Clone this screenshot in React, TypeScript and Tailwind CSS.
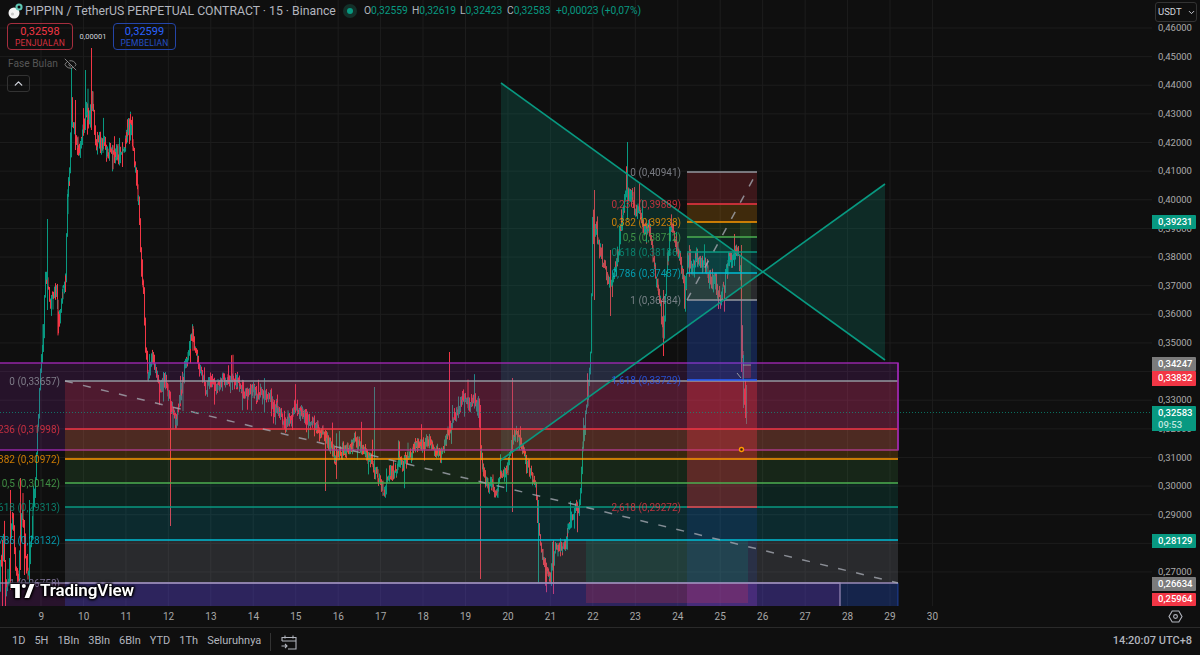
import React, { useMemo } from 'react';
import { ChevronDown, ChevronUp, EyeOff } from 'lucide-react';

const UP = '#089981';
const DOWN = '#f23645';

// price -> pixel on the plot
const py = (p: number) => 28 + (0.46 - p) * 2863;

const DAYS = [9, 10, 11, 12, 13, 14, 15, 16, 17, 18, 19, 20, 21, 22, 23, 24, 25, 26, 27, 28, 29, 30];
const TICKS = [46, 45, 44, 43, 42, 41, 40, 39, 38, 37, 36, 35, 34, 33, 32, 31, 30, 29, 28, 27];
const HIDDEN_TICKS = [34, 28];
const RANGES = ['1D', '5H', '1Bln', '3Bln', '6Bln', 'YTD', '1Th', 'Seluruhnya'];

// rough price path, read off the chart by hand: [x, y]
const PATH: [number, number][] = [
  [0, 570], [3, 540], [6, 590], [9, 560], [12, 520], [15, 555], [18, 575], [20, 520], [22, 500], [25, 540], [28, 570],
  [31, 520], [34, 480], [36, 440], [38, 410], [40, 360], [42, 340], [45, 275], [47, 270], [50, 300], [53, 290], [56, 290],
  [59, 320], [62, 290], [65, 280], [67, 200], [69, 170], [71, 130], [75, 140], [80, 150], [85, 115], [88, 120], [92, 100],
  [95, 135], [100, 145], [105, 150], [110, 150], [115, 155], [120, 150], [125, 140], [128, 120], [131, 125], [134, 165],
  [136, 175], [138, 200], [140, 240], [143, 300], [145, 350], [148, 380], [152, 365], [155, 375], [160, 390], [165, 375],
  [169, 400], [175, 420], [180, 400], [185, 370], [192, 335], [197, 360], [205, 390], [212, 380], [216, 385], [225, 385],
  [235, 380], [245, 395], [255, 395], [265, 395], [275, 405], [285, 420], [295, 405], [305, 420], [315, 425], [325, 445],
  [335, 450], [345, 455], [355, 440], [365, 450], [375, 465], [383, 485], [390, 465], [400, 460], [410, 450], [418, 445],
  [430, 445], [440, 450], [450, 420], [458, 405], [463, 395], [470, 405], [478, 408], [480, 450], [485, 480], [490, 485],
  [495, 490], [500, 470], [506, 465], [510, 440], [515, 430], [520, 445], [525, 465], [530, 475], [535, 490], [537, 520],
  [540, 550], [545, 570], [550, 580], [555, 545], [560, 548], [565, 545], [570, 520], [573, 510], [578, 510], [580, 490],
  [582, 450], [585, 420], [587, 400], [590, 360], [591, 300], [592, 240], [595, 240], [600, 255], [605, 265], [610, 290],
  [613, 280], [618, 250], [622, 220], [626, 190], [630, 200], [635, 210], [640, 215], [645, 225], [650, 230], [655, 270],
  [660, 310], [663, 345], [667, 260], [670, 230], [675, 245], [680, 265], [685, 285], [688, 265], [695, 262], [705, 270],
  [715, 285], [720, 295], [725, 275], [732, 265], [737, 252], [740, 280], [741, 330], [743, 385], [745, 405], [746, 412],
];

// long single wicks: [x, top, bottom, colour]
const SPIKES: [number, number, number, string][] = [
  [2, 540, 606, DOWN], [5, 560, 606, DOWN], [10, 490, 590, DOWN], [20, 478, 570, DOWN], [24, 520, 575, DOWN], [29, 500, 590, UP],
  [47, 219, 310, UP], [71, 68, 140, UP], [75, 100, 150, DOWN], [85, 70, 130, UP], [91, 48, 130, DOWN], [170, 400, 526, DOWN],
  [325, 430, 491, DOWN], [374, 387, 470, UP], [449, 352, 440, DOWN], [480, 405, 579, DOWN],
  [512, 378, 512, DOWN], [538, 500, 583, UP], [553, 540, 594, DOWN], [594, 190, 300, DOWN], [627, 142, 220, UP], [610, 250, 316, DOWN],
  [663, 290, 356, DOWN], [741, 245, 372, DOWN], [743, 355, 408, UP], [746, 385, 424, UP], [745, 380, 418, DOWN],
];

const FIB_BIG = [
  { y: 381, label: '0 (0,33657)', line: '#9598a1', fill: 'rgba(242,54,69,0.2)' },
  { y: 429, label: '0,236 (0,31998)', line: '#f23645', fill: 'rgba(255,152,0,0.18)' },
  { y: 459, label: '0,382 (0,30972)', line: '#ff9800', fill: 'rgba(76,175,80,0.15)' },
  { y: 483, label: '0,5 (0,30142)', line: '#4caf50', fill: 'rgba(8,153,129,0.15)' },
  { y: 507, label: '0,618 (0,29313)', line: '#089981', fill: 'rgba(0,188,212,0.16)' },
  { y: 540, label: '0,786 (0,28132)', line: '#00bcd4', fill: 'rgba(120,123,134,0.25)' },
  { y: 583, label: '1 (0,26758)', line: '#9a8bb8', fill: 'rgba(41,98,255,0.25)' },
];

const FIB_SMALL = [
  { y: 172, label: '0 (0,40941)', line: '#9598a1', fill: 'rgba(242,54,69,0.2)' },
  { y: 204, label: '0,236 (0,39889)', line: '#f23645', fill: 'rgba(255,152,0,0.2)' },
  { y: 222, label: '0,382 (0,39238)', line: '#ff9800', fill: 'rgba(76,175,80,0.15)' },
  { y: 237, label: '0,5 (0,38712)', line: '#4caf50', fill: 'rgba(8,153,129,0.15)' },
  { y: 252, label: '0,618 (0,38186)', line: '#089981', fill: 'rgba(0,188,212,0.15)' },
  { y: 273, label: '0,786 (0,37437)', line: '#00bcd4', fill: 'rgba(120,123,134,0.25)' },
  { y: 300, label: '1 (0,36484)', line: '#9598a1', fill: 'rgba(41,98,255,0.25)' },
  { y: 380, label: '1,618 (0,33729)', line: '#2962ff', fill: 'rgba(242,54,69,0.32)' },
  { y: 507, label: '2,618 (0,29272)', line: '#f23645', fill: 'rgba(41,98,255,0.12)' },
];

const LEFT_TAGS = [
  { text: '0,34247', cls: 'top-[357px] h-[14px] bg-[#7b7b7b]' },
  { text: '0,33832', cls: 'top-[371px] h-[15px] bg-[#f23645]' },
  { text: '0,28129', cls: 'top-[534px] h-[14px] bg-[#089981]' },
  { text: '0,26634', cls: 'top-[577px] h-[14px] bg-[#7b7b7b]' },
  { text: '0,25964', cls: 'top-[593px] h-[13px] bg-[#f23645]' },
  { text: '0,39231', cls: 'top-[215px] h-[14px] bg-[#089981]' },
];

const centerAt = (x: number) => {
  for (let i = 1; i < PATH.length; i++) {
    if (x <= PATH[i][0]) {
      const [x0, y0] = PATH[i - 1];
      const [x1, y1] = PATH[i];
      return y0 + ((x - x0) / (x1 - x0)) * (y1 - y0);
    }
  }
  return PATH[PATH.length - 1][1];
};

const buildCandles = () => {
  let seed = 77;
  const rnd = () => {
    seed = (seed * 16807) % 2147483647;
    return seed / 2147483647;
  };
  const out: { x: number; top: number; bottom: number; color: string }[] = [];
  let drift = 0;
  let prev = PATH[0][1];
  for (let i = 0; i <= 1492; i++) {
    const x = i * 0.5;
    const vol = x < 145 || x > 585 ? 1.35 : 1;
    drift = drift * 0.9 + (rnd() - 0.5) * 6 * vol;
    const close = centerAt(x) + drift + (rnd() - 0.5) * 9 * vol;
    // the odd long wick
    const wickUp = rnd() < 0.05 ? 8 + rnd() * 16 : rnd() * 5;
    const wickDown = rnd() < 0.05 ? 8 + rnd() * 16 : rnd() * 5;
    out.push({
      // mostly snapped to whole pixels, so reds and teals stay clean
      x: i % 5 === 0 ? x : Math.round(x),
      top: Math.min(prev, close) - wickUp,
      bottom: Math.max(prev, close) + wickDown,
      color: close < prev ? UP : DOWN,
    });
    prev = close;
  }
  return out;
};

const FibBands = ({ x0, x1, levels, endY }: { x0: number; x1: number; levels: typeof FIB_BIG; endY: number }) => (
  <>
    {levels.map((l, i) => {
      const next = i < levels.length - 1 ? levels[i + 1].y : endY;
      return <rect key={l.y} x={x0} y={l.y} width={x1 - x0} height={next - l.y} fill={l.fill} />;
    })}
  </>
);

const FibLines = ({ x0, x1, levels }: { x0: number; x1: number; levels: typeof FIB_BIG }) => (
  <>
    {levels.map((l) => (
      <line key={l.y} x1={x0} x2={x1} y1={l.y} y2={l.y} stroke={l.line} strokeWidth={1.6} />
    ))}
  </>
);

const FibLabels = ({ x, levels }: { x: number; levels: typeof FIB_BIG }) => (
  <>
    {levels.map((l) => (
      <text key={l.y} x={x} y={l.y + 3.5} textAnchor="end" fontSize={10} fill={l.line} opacity={0.78} fontFamily="Roboto, sans-serif">
        {l.label}
      </text>
    ))}
  </>
);

const Chart = () => {
  const candles = useMemo(buildCandles, []);
  return (
    <svg width={1152} height={606} className="block">
      {/* grid */}
      {TICKS.map((t) => (
        <line key={t} x1={0} x2={1152} y1={py(t / 100)} y2={py(t / 100)} stroke="#1d1d1d" />
      ))}
      {DAYS.map((d, i) => (
        <line key={d} x1={41 + i * 42.45} x2={41 + i * 42.45} y1={0} y2={606} stroke="#1d1d1d" />
      ))}

      {/* candles */}
      {candles.map((c, i) => (
        <rect key={i} x={c.x} y={c.top} width={1} height={c.bottom - c.top} fill={c.color} />
      ))}
      {SPIKES.map(([x, a, b, color], i) => (
        <rect key={i} x={x} y={a} width={1} height={b - a} fill={color} />
      ))}

      {/* triangle pattern fill */}
      <polygon points="501,83 762.6,271.6 501,460" fill="rgba(8,153,129,0.2)" />
      <polygon points="885,360 762.6,271.6 885,184" fill="rgba(8,153,129,0.2)" />

      {/* purple box and big fib */}
      <rect x={-3} y={363} width={901} height={87} fill="rgba(156,39,176,0.17)" stroke="#9c27b0" strokeWidth={1.4} />
      <FibBands x0={65} x1={898} levels={FIB_BIG} endY={606} />
      <rect x={-3} y={583} width={843} height={30} fill="rgba(156,39,176,0.18)" stroke="#9a8bb8" strokeWidth={1.2} />

      {/* small fib */}
      <FibBands x0={687} x1={757} levels={FIB_SMALL} endY={606} />
      <rect x={740} y={222} width={11} height={141} fill="rgba(76,175,80,0.16)" />
      <rect x={586} y={540} width={162} height={43} fill="rgba(8,153,129,0.18)" />
      <rect x={586} y={583} width={162} height={20} fill="rgba(242,54,69,0.2)" />
      <rect x={687} y={583} width={70} height={23} fill="rgba(242,54,180,0.14)" />

      <FibLines x0={65} x1={898} levels={FIB_BIG} />
      <FibLines x0={687} x1={757} levels={FIB_SMALL} />
      <line x1={898} x2={898} y1={363} y2={450} stroke="#9c27b0" strokeWidth={1.4} />
      <line x1={898} x2={898} y1={583} y2={606} stroke="#2962ff" strokeOpacity={0.5} />

      {/* trend lines */}
      <line x1={65} y1={381} x2={898} y2={583} stroke="#a3a6af" strokeOpacity={0.8} strokeWidth={1.5} strokeDasharray="8 10.5" />
      <line x1={687} y1={300} x2={757} y2={172} stroke="#a3a6af" strokeOpacity={0.8} strokeWidth={1.5} strokeDasharray="8 10.5" />
      <line x1={501} y1={83} x2={885} y2={360} stroke="#089981" strokeWidth={1.6} />
      <line x1={501} y1={460} x2={885} y2={184} stroke="#089981" strokeWidth={1.6} />

      {/* small marker box near the last candles */}
      <rect x={743} y={365} width={8} height={13} rx={1} fill="rgba(242,54,69,0.28)" />
      <line x1={743} x2={751} y1={365} y2={365} stroke="#9598a1" />
      <line x1={737} y1={373} x2={741} y2={378} stroke="#9598a1" />
      <circle cx={741.5} cy={449.5} r={2} fill="#3a1c10" stroke="#ff9800" strokeWidth={1.4} />

      {/* last price line */}
      <line x1={0} x2={1152} y1={412.5} y2={412.5} stroke="#089981" strokeOpacity={0.7} strokeDasharray="1 2" />

      <FibLabels x={60} levels={FIB_BIG} />
      <FibLabels x={681} levels={FIB_SMALL} />
    </svg>
  );
};

const Legend = () => (
  <div className="absolute left-0 top-0 text-[#b2b5be]">
    <div className="flex h-[22px] items-center pl-[7px]">
      <svg width={16} height={16} viewBox="0 0 16 16" className="mr-[2px] shrink-0">
        <circle cx={7} cy={10} r={5.5} fill="#f4f4f4" />
        <circle cx={5.5} cy={11} r={1.6} fill="#c8c8c8" />
        <circle cx={12} cy={4} r={3.6} fill="#5fc7b4" />
        <circle cx={12} cy={4} r={1.5} fill="#0f0f0f" />
      </svg>
      <span className="w-[318px] whitespace-nowrap text-[12.25px] leading-none">
        PIPPIN / TetherUS PERPETUAL CONTRACT · 15 · Binance
      </span>
      <span className="flex h-[14px] w-[14px] items-center justify-center rounded-full bg-[#133029]">
        <span className="h-[6px] w-[6px] rounded-full bg-[#089981]" />
      </span>
      <div className="ml-[7px] flex text-[10.3px] text-[#089981]">
        <span className="w-[48px]"><b className="font-normal text-[#b2b5be]">O</b>0,32559</span>
        <span className="w-[48px]"><b className="font-normal text-[#b2b5be]">H</b>0,32619</span>
        <span className="w-[47px]"><b className="font-normal text-[#b2b5be]">L</b>0,32423</span>
        <span className="w-[49px]"><b className="font-normal text-[#b2b5be]">C</b>0,32583</span>
        <span className="whitespace-nowrap">+0,00023 (+0,07%)</span>
      </div>
    </div>
    <div className="ml-[7px] mt-px flex items-center">
      <div className="flex h-[27px] w-[66px] flex-col items-center justify-center rounded-[4px] border border-[#a62e3e] leading-none">
        <span className="text-[11px] text-[#f23645]">0,32598</span>
        <span className="mt-[2px] text-[8.5px] tracking-[0.2px] text-[#d8303f]">PENJUALAN</span>
      </div>
      <span className="w-[40px] text-center text-[7.5px] text-[#d1d4dc]">0,00001</span>
      <div className="flex h-[27px] w-[63px] flex-col items-center justify-center rounded-[4px] border border-[#2445a8] leading-none">
        <span className="text-[11px] text-[#2962ff]">0,32599</span>
        <span className="mt-[2px] text-[8.5px] tracking-[0.2px] text-[#2450c8]">PEMBELIAN</span>
      </div>
    </div>
    <div className="ml-[8px] mt-[6px] flex h-[16px] items-center text-[10.2px] text-[#565656]">
      <span className="w-[56px]">Fase Bulan</span>
      <EyeOff size={13} strokeWidth={1.5} className="text-[#9a9a9a]" />
    </div>
    <div className="ml-[7px] mt-[3px] flex h-[17px] w-[23px] items-center justify-center rounded-[3px] border border-[#333333]">
      <ChevronUp size={13} strokeWidth={2.4} className="text-[#d1d4dc]" />
    </div>
  </div>
);

const Logo = () => (
  <div className="absolute bottom-[7px] left-[10px] flex items-center gap-[5px] text-white [filter:drop-shadow(0_0_1px_#000)_drop-shadow(0_0_1px_#000)_drop-shadow(0_0_1px_#000)]">
    <svg width={25} height={14} viewBox="0 0 36 21" fill="#fff">
      <path d="M14 0H0v6h7v15h7V0zM28 21h-7l8-21h7l-8 21z" />
      <circle cx={20} cy={3} r={3} />
    </svg>
    <span className="text-[17px] font-semibold leading-none tracking-[-0.1px]">TradingView</span>
  </div>
);

const PriceAxis = () => (
  <div className="relative w-[48px] text-[9.5px] text-[#ababab]">
    <div className="pl-[6px] pt-[14px]">
      {TICKS.map((t) => (
        <div key={t} className="flex h-[28.63px] items-center">
          {HIDDEN_TICKS.includes(t) ? '' : `0,${t}000`}
        </div>
      ))}
    </div>
    <div className="absolute left-[3px] top-[2px] flex h-[20px] w-[42px] items-center rounded-[3px] border border-[#333333] bg-[#0f0f0f] pl-[2px] text-[9.5px] text-[#d1d4dc]">
      USDT
      <ChevronDown size={9} strokeWidth={2.5} className="ml-[5px]" />
    </div>
    {LEFT_TAGS.map((t) => (
      <div key={t.text} className={`absolute left-0 flex w-[44px] items-center rounded-r-[1px] pl-[6px] font-medium text-white ${t.cls}`}>
        {t.text}
      </div>
    ))}
    <div className="absolute left-0 top-[406px] flex h-[25px] w-[44px] flex-col justify-center rounded-r-[1px] bg-[#089981] pl-[6px] font-medium leading-[12px] text-white">
      <span>0,32583</span>
      <span className="text-[#bfe6df]">09:53</span>
    </div>
  </div>
);

export default function App() {
  return (
    <div className="flex h-[655px] w-[1200px] flex-col overflow-hidden bg-[#0f0f0f] font-['Roboto',sans-serif]">
      <div className="flex h-[606px]">
        <div className="relative w-[1152px] overflow-hidden">
          <Chart />
          <Legend />
          <Logo />
        </div>
        <PriceAxis />
      </div>

      <div className="flex h-[22px] border-b border-[#2a2a2a]">
        <div className="flex w-[1152px] items-center pl-[20px] text-[10px] text-[#a8a8a8]">
          {DAYS.map((d) => (
            <span key={d} className="w-[42.45px] shrink-0 text-center">{d}</span>
          ))}
        </div>
        <div className="flex w-[48px] items-center pl-[16px]">
          <svg width={15} height={15} viewBox="0 0 15 15" fill="none" stroke="#b2b5be" strokeWidth={1.1}>
            <path d="M4.2 2h6.6l3.2 5.5-3.2 5.5H4.2L1 7.5z" />
            <circle cx={7.5} cy={7.5} r={1.9} />
          </svg>
        </div>
      </div>

      <div className="flex h-[27px] items-center justify-between pl-[12px] pr-[8px] text-[#b2b5be]">
        <div className="flex items-center">
          <div className="flex gap-[9px] text-[11px]">
            {RANGES.map((r) => (
              <span key={r}>{r}</span>
            ))}
          </div>
          <span className="ml-[9px] h-[18px] w-px bg-[#333333]" />
          <svg width={18} height={18} viewBox="0 0 18 18" fill="none" stroke="#b2b5be" strokeWidth={1.1} className="ml-[9px]">
            <path d="M2 8V4.5h14V16H8M2 8h14M5 2.5v3M13 2.5v3M1.5 13H7M5 11l2 2-2 2" />
          </svg>
        </div>
        <span className="text-[11px] font-medium">14:20:07 UTC+8</span>
      </div>
    </div>
  );
}
